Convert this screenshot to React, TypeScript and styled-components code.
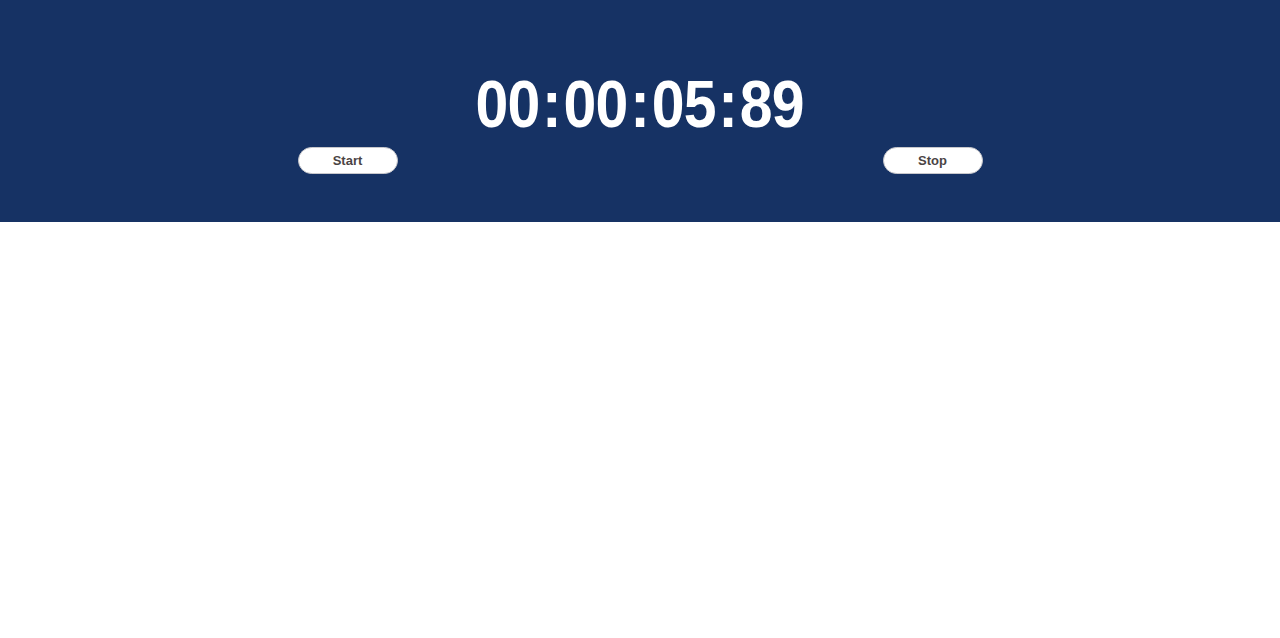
import React from "react";
import styled, { createGlobalStyle } from "styled-components";

const Global = createGlobalStyle`
  html, body { margin: 0; padding: 0; background: #fff; }
  body { font-family: "Liberation Sans", Arial, Helvetica, sans-serif; }
`;

const Header = styled.header`
  background: #163264;
  height: 222px;
  box-sizing: border-box;
  padding-top: 64px;
  display: flex;
  flex-direction: column;
  align-items: center;
`;

const Time = styled.h1`
  margin: 0;
  color: #fff;
  font-family: "Liberation Sans", Arial, Helvetica, sans-serif;
  font-size: 67px;
  font-weight: 700;
  letter-spacing: -0.9px;
  line-height: 80px;
  height: 80px;
  white-space: nowrap;
  transform: scaleX(0.88);
`;

const Sep = styled.span`
  margin: 0 3px;
`;

const Row = styled.div`
  width: 1170px;
  display: grid;
  grid-template-columns: 1fr 1fr;
  margin-top: 3px;
`;

const Col = styled.div`
  display: flex;
  justify-content: center;
`;

const Button = styled.button`
  width: 100px;
  height: 27px;
  border-radius: 14px;
  background: #fff;
  border: 1px solid #c8c8cc;
  color: #4a4444;
  font-family: "Liberation Sans", Arial, Helvetica, sans-serif;
  font-weight: 700;
  font-size: 13px;
  padding: 0;
  cursor: pointer;
`;

const parts = ["00", "00", "05", "89"];

export default function App() {
  return (
    <>
      <Global />
      <Header>
        <Time>
          {parts.map((p, i) => (
            <React.Fragment key={i}>
              {i > 0 && <Sep>:</Sep>}
              {p}
            </React.Fragment>
          ))}
        </Time>
        <Row>
          <Col>
            <Button>Start</Button>
          </Col>
          <Col>
            <Button>Stop</Button>
          </Col>
        </Row>
      </Header>
    </>
  );
}
